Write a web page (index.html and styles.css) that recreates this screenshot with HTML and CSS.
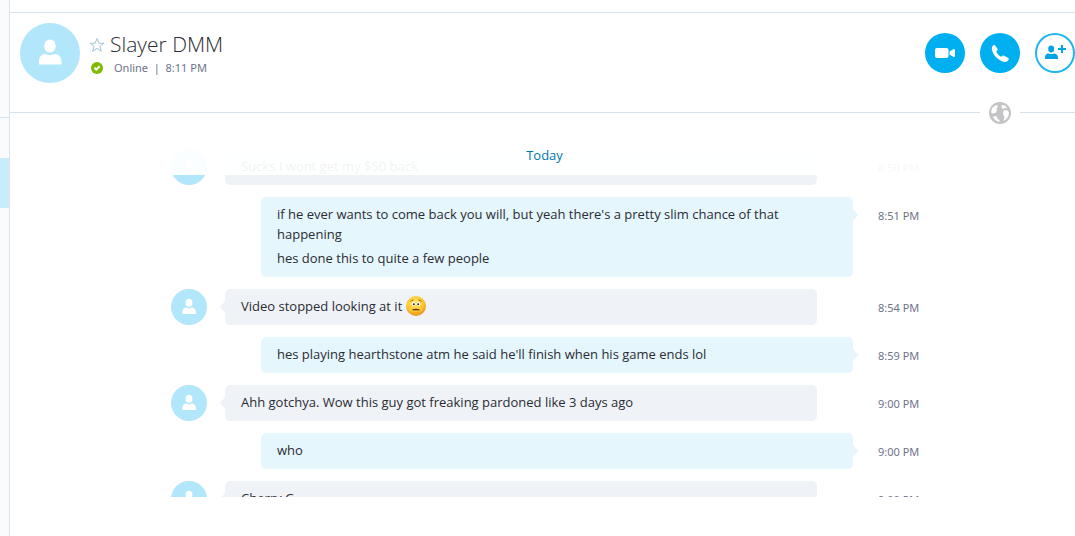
FILE: index.html
```html
<!DOCTYPE html>
<html lang="en">
<head>
  <meta charset="UTF-8" />
  <meta name="viewport" content="width=device-width, initial-scale=1.0"/>
  <title>Slayer DMM - Chat</title>
  <link rel="stylesheet" href="styles.css">
</head>
<body>

  <!-- shared icons -->
  <svg class="sprite" aria-hidden="true">
    <symbol id="person" viewBox="0 0 60 60">
      <ellipse cx="30" cy="23" rx="5.800" ry="6.600"/>
      <path d="M19 41.500v-3c0-5 3-7.500 6.500-7.500c2 1.500 7 1.500 9 0c3.500 0 7 2.500 7 7.500v3z"/>
    </symbol>
  </svg>

  <aside class="sidebar">
    <div class="sidebar-top"></div>
    <div class="sidebar-selected"></div>
  </aside>

  <main class="chat">
    <header class="chat-header">
      <div class="avatar avatar-large"><svg><use href="#person"/></svg></div>
      <div class="contact">
        <div class="contact-row">
          <svg class="star" viewBox="0 0 16 16"><path d="M8 1.600l1.900 4.600h4.900l-3.900 3.200 1.500 4.900L8 11.400l-4.400 2.900 1.500-4.900-3.900-3.200h4.900z"/></svg>
          <h1>Slayer DMM</h1>
        </div>
        <div class="contact-row status">
          <svg class="online" viewBox="0 0 16 16"><circle cx="8" cy="8" r="6"/><path d="M5.400 7.800l1.900 1.800 3.300-3.300"/></svg>
          <span>Online&nbsp; | &nbsp;8:11 PM</span>
        </div>
      </div>
      <div class="actions">
        <button class="round-btn" aria-label="Video call">
          <svg viewBox="0 0 40 40"><rect x="10" y="15" width="13.500" height="10" rx="2"/><path d="M24.500 18.500l3.700-2.300c1-.6 1.800-.3 1.800.7v6.200c0 1-.8 1.300-1.800.7L24.500 21.500z"/></svg>
        </button>
        <button class="round-btn" aria-label="Call">
          <svg viewBox="0 0 40 40"><path d="M12.300 13.600c.8-1.300 1.800-1.800 2.700-1.400l2.500 3.500c.4.700.1 1.200-.4 1.800l-.9 1c1 2.300 2.500 4 4.900 5.300l1.400-1c.5-.4 1-.4 1.600-.1l4.300 2.400c.7.500.4 1.500-.3 2.500c-.8 1.300-2.600 1.700-4.500 1.200c-5.400-1.600-10.200-6.200-11.600-11.800c-.3-1.300-.2-2.500.3-3.400z"/></svg>
        </button>
        <button class="round-btn outline" aria-label="Add people">
          <svg viewBox="0 0 40 40"><ellipse cx="16.200" cy="16" rx="3" ry="3.400"/><path d="M10 26v-1.500c0-2.500 1.500-4 3.500-4c1.500.7 4 .7 5.500 0c2 0 4 1.500 4 4V26z"/><path d="M26 12h2v3h3v2h-3v3h-2v-3h-3v-2h3z"/></svg>
        </button>
      </div>
    </header>

    <div class="divider">
      <svg class="globe" viewBox="0 0 22 22">
        <circle cx="11" cy="11" r="11"/>
        <path d="M3 6.500C4.500 4.500 6 3.500 8 3l1 1.500-1.500 2L8 8.500l-1.500 2.500L3 11.500l-1-1.500z"/>
        <path d="M13 3l3 .5 2.500 3L16 6l-2.500 1-1-2z"/>
        <path d="M5.500 14l2.500.5.500 2.500 2.500 1.500-1.500 1.500C7 19 5 17 4 15z"/>
        <path d="M14.500 8.500l3-.5 2.500 2-.5 4-2.500 3.500-2.500 1.500 1-4-1.500-3z"/>
      </svg>
    </div>

    <section class="messages">
      <div class="day"><span>Today</span></div>

      <div class="row">
        <div class="avatar"><svg><use href="#person"/></svg></div>
        <div class="bubble"><p>Sucks I wont get my $50 back</p></div>
        <time>8:50 PM</time>
      </div>
      <div class="row mine">
        <div class="bubble">
          <p>if he ever wants to come back you will, but yeah there's a pretty slim chance of that happening</p>
          <p>hes done this to quite a few people</p>
        </div>
        <time>8:51 PM</time>
      </div>
      <div class="row">
        <div class="avatar"><svg><use href="#person"/></svg></div>
        <div class="bubble">
          <p>Video stopped looking at it
            <svg class="emoji" viewBox="0 0 20 20" role="img" aria-label="worried">
              <defs>
                <radialGradient id="face" cx="45%" cy="35%" r="65%">
                  <stop offset="0" stop-color="#ffe96b"/>
                  <stop offset=".65" stop-color="#fcc62b"/>
                  <stop offset="1" stop-color="#ee8f1c"/>
                </radialGradient>
              </defs>
              <circle cx="10" cy="10" r="10" fill="url(#face)"/>
              <ellipse cx="7.500" cy="8" rx="2" ry="1.900" fill="#fff"/>
              <ellipse cx="12.500" cy="8" rx="2" ry="1.900" fill="#fff"/>
              <circle cx="7.800" cy="8.200" r="1" fill="#3b2a12"/>
              <circle cx="12.200" cy="8.200" r="1" fill="#3b2a12"/>
              <path d="M4.500 5.300l3-1.600M15.500 5.300l-3-1.600" stroke="#a5641a" fill="none"/>
              <path d="M6.500 14c2-.6 5-.6 7 0" stroke="#5d3210" stroke-width="1.300" fill="none"/>
            </svg>
          </p>
        </div>
        <time>8:54 PM</time>
      </div>
      <div class="row mine">
        <div class="bubble"><p>hes playing hearthstone atm he said he'll finish when his game ends lol</p></div>
        <time>8:59 PM</time>
      </div>
      <div class="row">
        <div class="avatar"><svg><use href="#person"/></svg></div>
        <div class="bubble"><p>Ahh gotchya. Wow this guy got freaking pardoned like 3 days ago</p></div>
        <time>9:00 PM</time>
      </div>
      <div class="row mine">
        <div class="bubble"><p>who</p></div>
        <time>9:00 PM</time>
      </div>
      <div class="row">
        <div class="avatar"><svg><use href="#person"/></svg></div>
        <div class="bubble"><p>Cherry G</p></div>
        <time>9:00 PM</time>
      </div>
    </section>
  </main>

</body>
</html>
```

FILE: styles.css
```css
* {
  box-sizing: border-box;
}

body {
  display: flex;
  height: 100vh;
  margin: 0;
  overflow: hidden;
  font-family: "Open Sans", "Noto Sans", sans-serif;
  font-size: 13px;
  color: #2b2c33;
  background-color: #fff;
}

h1, p {
  margin: 0;
}

.sprite {
  position: absolute;
  width: 0;
  height: 0;
}

/* strip of the contact list */
.sidebar {
  width: 10px;
  flex: none;
  background-color: #fafbfd;
  border-right: 1px solid #d9e4ed;
}

.sidebar-top {
  height: 118px;
  margin-bottom: 40px;
  border-bottom: 1px solid #d4e3ee;
}

.sidebar-selected {
  height: 50px;
  background-color: #c7edfc;
}

.chat {
  flex: 1;
  min-width: 0;
  display: flex;
  flex-direction: column;
  padding: 12px 0 39px;
}

/* header */
.chat-header {
  display: flex;
  align-items: flex-start;
  height: 90px;
  padding: 10px 0 0 10px;
  border-top: 1px solid #d4e3ee;
}

.avatar {
  width: 36px;
  height: 36px;
  flex: none;
  border-radius: 50%;
  background-color: #b2e6fb;
}

.avatar svg {
  display: block;
  width: 100%;
  height: 100%;
  fill: #fff;
}

.avatar-large {
  width: 60px;
  height: 60px;
}

.contact {
  padding: 8px 0 0 9px;
}

.contact-row {
  display: flex;
  align-items: center;
}

h1 {
  margin-left: 5px;
  padding-bottom: 2px;
  font-size: 21px;
  line-height: 26px;
  font-weight: 300;
}

.star, .online {
  width: 16px;
  height: 16px;
  fill: none;
  stroke: #a3c3d6;
}

.online circle {
  fill: #7fba00;
  stroke: none;
}

.online path {
  stroke: #fff;
  stroke-width: 2;
}

.status {
  font-family: "Noto Sans", sans-serif;
  font-size: 11px;
  line-height: 18px;
  color: #6e7389;
}

.status span {
  margin-left: 9px;
}

.actions {
  display: flex;
  gap: 15px;
  margin: 10px 0 0 auto;
}

.round-btn {
  width: 40px;
  height: 40px;
  padding: 0;
  border: none;
  border-radius: 50%;
  background-color: #00aff0;
  cursor: pointer;
}

.round-btn svg {
  display: block;
  width: 40px;
  height: 40px;
  fill: #fff;
}

.round-btn.outline {
  background-color: #fff;
  box-shadow: inset 0 0 0 2px #1fb6f0;
}

.round-btn.outline svg {
  fill: #00a5e3;
}

.divider {
  display: flex;
  align-items: center;
  height: 22px;
}

.divider::before, .divider::after {
  content: "";
  flex: 1;
  height: 2px;
  border-top: 1px solid #d4e3ee;
}

.divider::after {
  flex: none;
  width: 55px;
}

.globe {
  width: 22px;
  height: 22px;
  margin: 0 9px;
  fill: #fff;
}

.globe circle {
  fill: #c4c4c6;
}

/* messages */
.messages {
  position: relative;
  flex: 1;
  min-height: 0;
  overflow: hidden;
  display: flex;
  flex-direction: column;
  gap: 12px;
  margin-top: 12px;
  padding: 13px 157px 0 161px;
}

.day {
  position: absolute;
  top: 0;
  left: 0;
  right: 0;
  z-index: 1;
  height: 39px;
  padding-left: 4px;
  text-align: center;
  line-height: 38px;
  color: #0078ad;
}

.day::before {
  content: "";
  position: absolute;
  inset: 0;
  background-color: #fff;
  opacity: 0.94;
}

.day span {
  position: relative;
}

.row {
  display: flex;
  flex: none;
  align-items: flex-start;
}

.row .avatar {
  margin-right: 18px;
}

.bubble {
  position: relative;
  flex: 1;
  margin-right: 36px;
  padding: 7px 64px 9px 16px;
  border-radius: 5px;
  background-color: #eff3f8;
  line-height: 20px;
}

.bubble p + p {
  margin-top: 4px;
}

.bubble::before {
  content: "";
  position: absolute;
  top: 12px;
  left: -5px;
  border: solid transparent;
  border-width: 6px 5px 6px 0;
  border-right-color: #eff3f8;
}

.mine .bubble {
  margin-left: 90px;
  margin-right: 0;
  background-color: #e5f6fd;
}

.mine .bubble::before {
  left: auto;
  right: -5px;
  border-width: 6px 0 6px 5px;
  border-left-color: #e5f6fd;
}

time {
  width: 65px;
  flex: none;
  padding: 2px 0 0 25px;
  font-family: "Noto Sans", sans-serif;
  font-size: 11px;
  line-height: 34px;
  white-space: nowrap;
  color: #6e7389;
}

.emoji {
  width: 20px;
  height: 20px;
  vertical-align: top;
}
```
